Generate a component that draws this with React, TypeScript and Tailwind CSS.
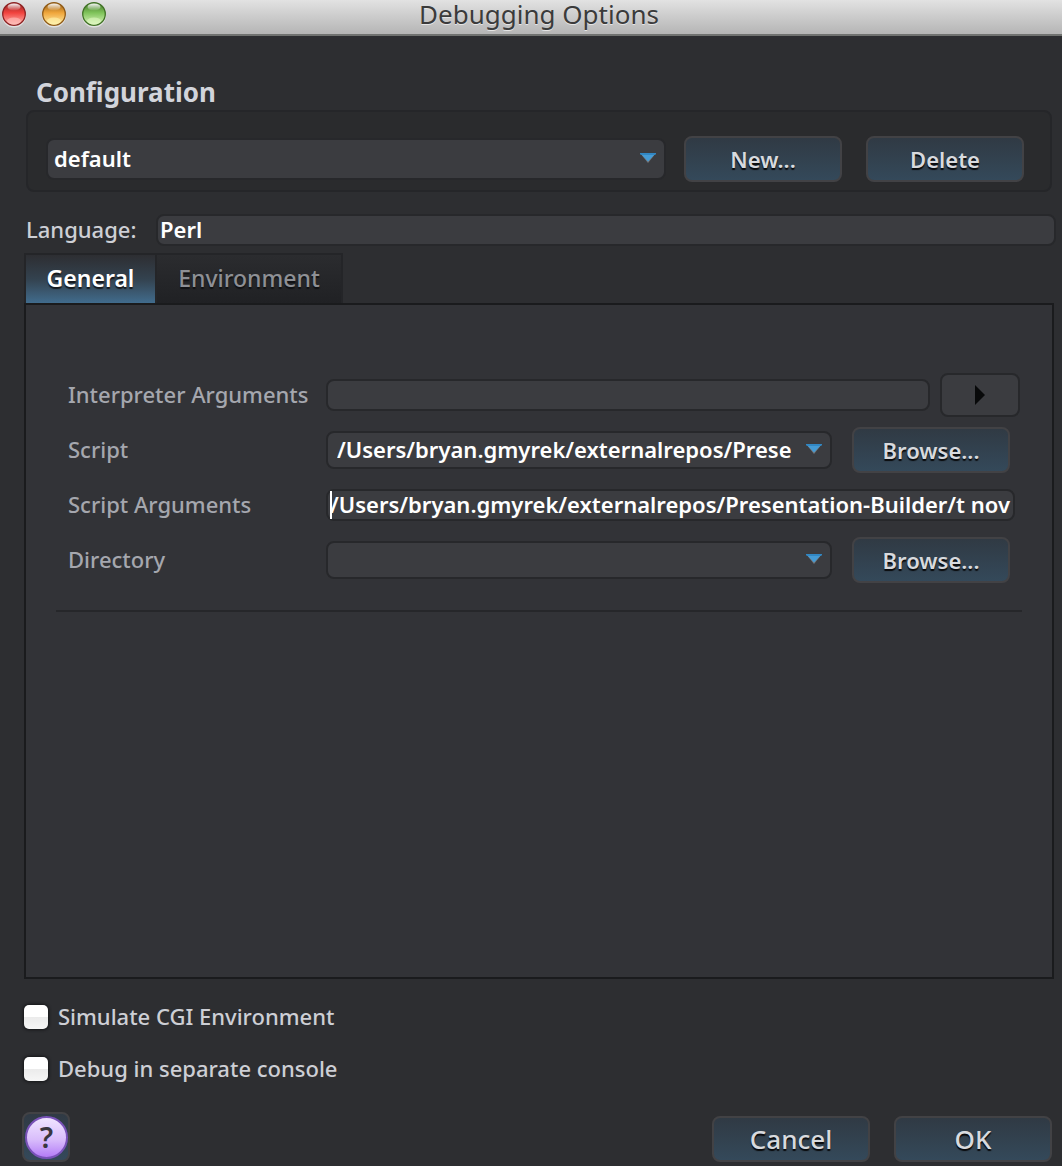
import type { ReactNode } from "react";

const field =
  "rounded-lg border-2 border-[#27282b] bg-[#3b3c40] text-white font-semibold outline-none";

function ActionButton({ children, large = false }: { children: ReactNode; large?: boolean }) {
  return (
    <button
      type="button"
      className={`h-[46px] w-[158px] shrink-0 rounded-lg border-2 border-[#424245] bg-linear-to-b from-[#303a44] to-[#34495a] text-[#d8dade] [text-shadow:0_2px_1px_#08090b] ${
        large ? "text-[26px] font-medium" : "text-[22px] font-semibold"
      }`}
    >
      {children}
    </button>
  );
}

function DropDown({ id, label, value, className }: { id: string; label: string; value: string; className: string }) {
  return (
    <div className="relative min-w-0 flex-1">
      <select id={id} aria-label={label} className={`${field} block w-full appearance-none pr-8 pb-0.5 ${className}`}>
        <option>{value}</option>
      </select>
      <svg className="pointer-events-none absolute top-1/2 right-2.5 -mt-1.5" width="16" height="10" viewBox="0 0 16 10" aria-hidden="true">
        <path d="M0 0H16L8 10Z" fill="#75777a" />
        <path d="M0 0H16L8 8.6Z" fill="#459bd5" />
        <path d="M0 0H16V1L15 2H1L0 1Z" fill="#3187c3" />
      </svg>
    </div>
  );
}

function Row({ id, label, children }: { id: string; label: string; children: ReactNode }) {
  return (
    <div className="flex h-[46px] items-center">
      <label htmlFor={id} className="w-[258px] shrink-0 pb-0.5 font-medium text-[#a5a7ae]">
        {label}
      </label>
      {children}
    </div>
  );
}

function Light({ name, dark, mid, light }: { name: string; dark: string; mid: string; light: string }) {
  return (
    <button type="button" aria-label={name} className="size-6">
      <svg width="24" height="26" viewBox="0 0 24 26" aria-hidden="true">
        <defs>
          <linearGradient id={name} x1="0" y1="0" x2="0" y2="1">
            <stop offset="0" stopColor={dark} />
            <stop offset="0.45" stopColor={mid} />
            <stop offset="1" stopColor={light} />
          </linearGradient>
          <linearGradient id={`${name}-shine`} x1="0" y1="0" x2="0" y2="1">
            <stop offset="0" stopColor="#fff" stopOpacity="0.95" />
            <stop offset="1" stopColor="#fff" stopOpacity="0.05" />
          </linearGradient>
        </defs>
        <circle cx="12" cy="13.5" r="12" fill="#e2e2e2" />
        <circle cx="12" cy="12" r="11.3" fill={`url(#${name})`} stroke={dark} strokeWidth="1.3" />
        <ellipse cx="12" cy="5" rx="6.5" ry="3.4" fill={`url(#${name}-shine)`} />
        <ellipse cx="12" cy="19" rx="7" ry="3.5" fill={light} opacity="0.6" />
      </svg>
    </button>
  );
}

function CheckRow({ label }: { label: string }) {
  return (
    <label className="flex h-[52px] items-center gap-2.5 font-medium text-[#cdcfd5]">
      <input
        type="checkbox"
        className="size-6 appearance-none rounded-[5px] bg-linear-to-b from-white from-50% via-[#ebebeb] via-50% to-[#f6f6f6] shadow-[0_0_3px_1px_#151618] checked:bg-sky-400"
      />
      <span className="pb-0.5">{label}</span>
    </label>
  );
}

export default function App() {
  return (
    <div className="flex min-h-screen flex-col bg-[#2d2e31] font-['Noto_Sans','Open_Sans',sans-serif] text-[22px] leading-[30px]">
      <header className="relative flex h-9 items-start border-b-2 border-[#707270] bg-linear-to-b from-[#e2e2e2] to-[#b5b5b5] pt-0.5 pl-0.5">
        <div className="flex gap-4">
          <Light name="Close" dark="#8d2323" mid="#f2443f" light="#ffc0bb" />
          <Light name="Minimize" dark="#905b17" mid="#f0a63c" light="#fff3ad" />
          <Light name="Zoom" dark="#417226" mid="#80c45b" light="#e0f8c2" />
        </div>
        <h1 className="pointer-events-none absolute inset-x-0 top-0 pl-4 text-center text-[26px] leading-7 text-[#3b3b3b] [text-shadow:0_1px_0_#e6e6e6]">
          Debugging Options
        </h1>
      </header>

      <main className="flex flex-1 flex-col pt-[39px]">
        <section>
          <h2 className="pl-9 text-[26px] leading-[34px] font-bold text-[#d2d4db]">Configuration</h2>
          <div className="mt-px mr-2.5 ml-[26px] flex h-[82px] items-center gap-[18px] rounded-lg border-2 border-[#252629] bg-[#2a2b2d] pr-[26px] pl-[18px] pt-4">
            <DropDown id="configuration" label="Configuration" value="default" className="h-[42px] pl-1.5" />
            <div className="flex gap-6">
              <ActionButton>New...</ActionButton>
              <ActionButton>Delete</ActionButton>
            </div>
          </div>
        </section>

        <div className="mt-[22px] mr-1.5 ml-[26px] flex h-8 items-center">
          <label htmlFor="language" className="w-[130px] shrink-0 pb-0.5 font-medium text-[#cdcfd5]">
            Language:
          </label>
          <input id="language" readOnly value="Perl" className={`${field} h-8 min-w-0 flex-1 px-0.5 pb-0.5`} />
        </div>

        <div className="mt-[7px] mr-2 ml-6 flex min-h-0 flex-1 flex-col">
          <div role="tablist" className="flex h-[50px] text-[23px]">
            <button
              role="tab"
              aria-selected="true"
              className="w-[133px] border-2 border-b-0 border-[#242528] bg-linear-to-b from-[#2d2e32] via-[#33424f] via-50% to-[#416c8d] pb-0.5 font-semibold text-white [text-shadow:0_2px_1px_#15181c]"
            >
              General
            </button>
            <button
              role="tab"
              aria-selected="false"
              className="w-[186px] border-2 border-b-0 border-l-0 border-[#242528] bg-linear-to-b from-[#2b2c2f] to-[#202124] pb-0.5 font-medium text-[#8e9095] [text-shadow:0_2px_1px_#101113]"
            >
              Environment
            </button>
          </div>
          <div role="tabpanel" className="flex-1 border-2 border-[#1a1b1d] bg-[#323337] px-[30px] pt-[67px]">
            <div className="flex flex-col gap-[9px] pl-3">
              <Row id="interpreter" label="Interpreter Arguments">
                <input id="interpreter" className={`${field} h-8 min-w-0 flex-1 px-1`} />
                <button
                  type="button"
                  aria-label="Insert argument"
                  className="mr-0.5 ml-2.5 flex h-11 w-20 shrink-0 items-center justify-center rounded-lg border-2 border-[#27282b] bg-[#3b3c40]"
                >
                  <svg width="12" height="20" viewBox="0 0 12 20" aria-hidden="true">
                    <path d="M1 0L11 10L1 20Z" fill="#08090a" />
                  </svg>
                </button>
              </Row>
              <Row id="script" label="Script">
                <DropDown id="script" label="Script" value="/Users/bryan.gmyrek/externalrepos/Prese" className="h-[38px] pl-[9px]" />
                <div className="ml-5 mr-3 shrink-0">
                  <ActionButton>Browse...</ActionButton>
                </div>
              </Row>
              <Row id="arguments" label="Script Arguments">
                <div className="relative mr-[7px] min-w-0 flex-1">
                  <input
                    id="arguments"
                    defaultValue="/Users/bryan.gmyrek/externalrepos/Presentation-Builder/t nov"
                    className={`${field} block h-8 w-full pb-0.5 pl-0.5`}
                  />
                  <span className="absolute inset-y-0.5 left-1 w-0.5 bg-white" />
                </div>
              </Row>
              <Row id="directory" label="Directory">
                <DropDown id="directory" label="Directory" value="" className="h-[38px] pl-[9px]" />
                <div className="ml-5 mr-3 shrink-0">
                  <ActionButton>Browse...</ActionButton>
                </div>
              </Row>
            </div>
            <hr className="mt-[27px] border-t-2 border-[#26272a]" />
          </div>
        </div>

        <div className="pt-3 pl-6">
          <CheckRow label="Simulate CGI Environment" />
          <CheckRow label="Debug in separate console" />
        </div>

        <footer className="flex items-end justify-between pt-[17px] pr-2.5 pb-1 pl-[22px]">
          <button
            type="button"
            aria-label="Help"
            className="flex h-[50px] w-12 items-center justify-end rounded-lg border-2 border-[#424245] bg-linear-to-b from-[#303a44] to-[#34495a]"
          >
            <span className="flex size-[43px] shrink-0 items-center justify-center rounded-full border-2 border-[#7952b8] bg-linear-to-b from-[#f0e5ff] via-[#d9bdfb] via-55% to-[#b47bf6] text-[29px] font-semibold text-[#39363e]">
              ?
            </span>
          </button>
          <div className="flex gap-6">
            <ActionButton large>Cancel</ActionButton>
            <ActionButton large>OK</ActionButton>
          </div>
        </footer>
      </main>
    </div>
  );
}
